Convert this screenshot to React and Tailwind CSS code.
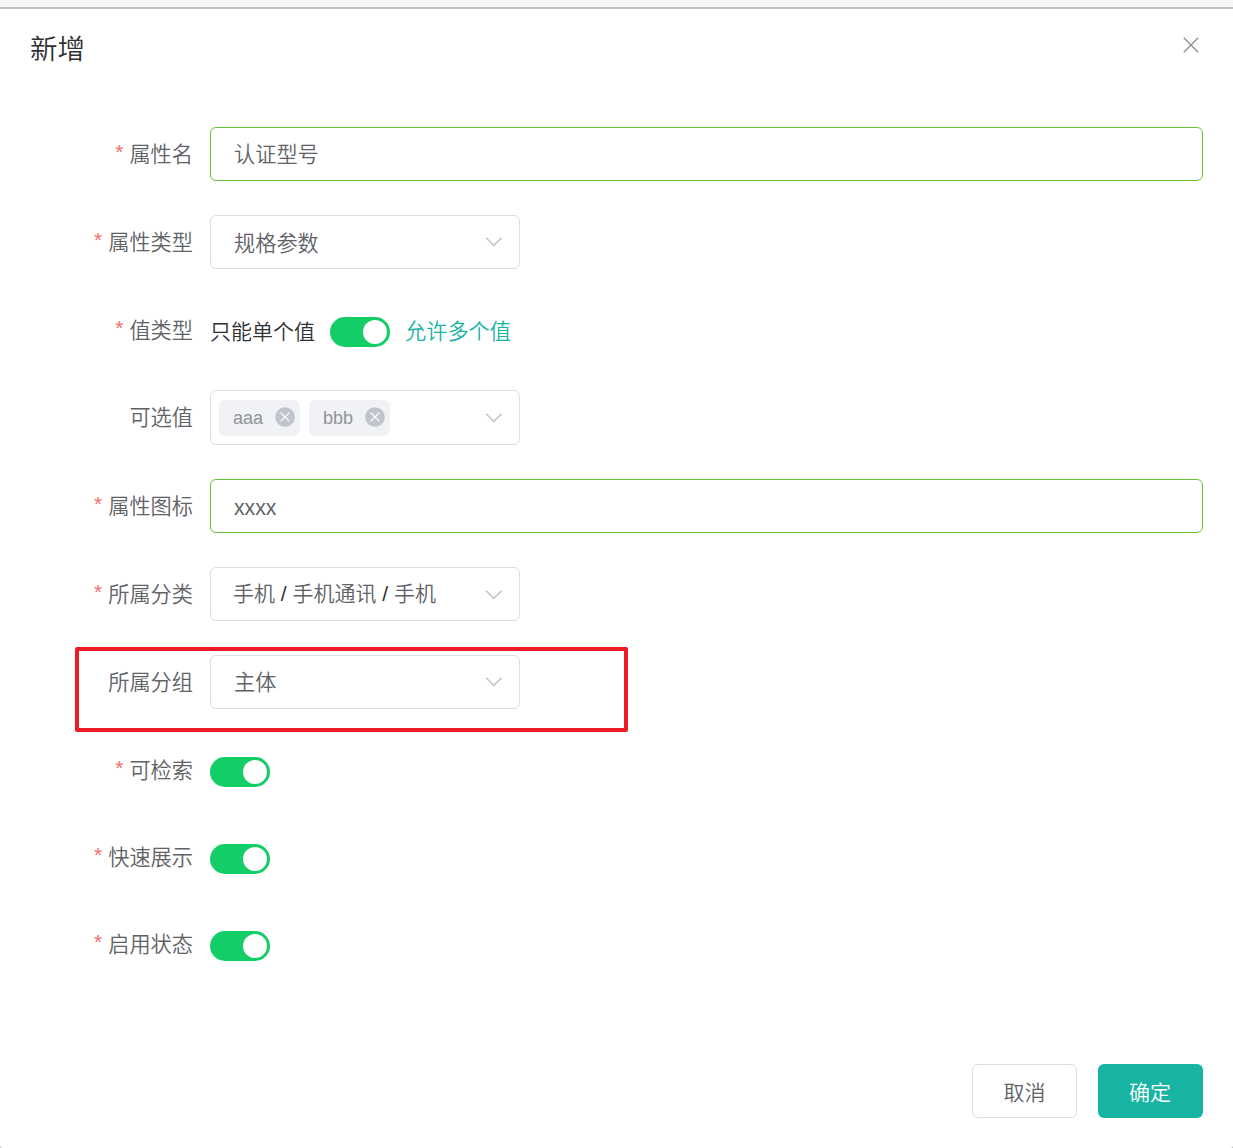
import React, { useState } from 'react';

function ChevronDown({ className = "" }) {
  return (
    <svg className={`w-[18px] h-[10px] shrink-0 ${className}`} viewBox="0 0 18 10" fill="none" stroke="#c0c4cc" strokeWidth="1.5">
      <path d="M1 0.8 L8.8 8.4 L16.6 0.8" />
    </svg>
  );
}

function FormRow({ label, required, height = "h-[88px]", children }) {
  return (
    <div className={`relative flex items-start ${height}`}>
      <label className="w-[180px] h-[54px] shrink-0 pr-[17px] flex items-center justify-end text-[#606266]">
        {required && <span className="mr-[6px] pb-1 text-[#f56c6c]">*</span>}
        <span className="pt-[2px] text-[21.2px]">{label}</span>
      </label>
      {children}
    </div>
  );
}

function TextInput({ value, onChange, className = "pt-[3px]" }) {
  return (
    <input
      value={value}
      onChange={(e) => onChange(e.target.value)}
      className={`grow h-[54px] px-[23px] rounded-[6px] border border-[#67c23a] text-[21.2px] text-[#606266] outline-none ${className}`}
    />
  );
}

function SelectBox({ children, className = "h-[54px] pl-[23px]", arrow = "" }) {
  return (
    <div className={`w-[310px] pr-4 flex items-center justify-between rounded-[6px] border border-[#dcdfe6] text-[#606266] cursor-pointer ${className}`}>
      {children}
      <ChevronDown className={arrow} />
    </div>
  );
}

function Switch({ checked, onChange, className = "" }) {
  return (
    <button
      type="button"
      role="switch"
      aria-checked={checked}
      onClick={() => onChange(!checked)}
      className={`w-[60px] h-[30px] p-[3px] flex items-center rounded-full ${checked ? "justify-end bg-[#13ce66]" : "justify-start bg-[#dcdfe6]"} ${className}`}
    >
      <span className="w-6 h-6 rounded-full bg-white" />
    </button>
  );
}

function Tag({ text, onClose }) {
  return (
    <span className="h-9 w-[81px] pl-[14px] pr-[5px] flex items-center justify-between rounded-[6px] bg-[#f0f2f5] text-[18px] text-[#909399]">
      {text}
      <svg onClick={onClose} className="w-5 h-5 -mt-[2px]" viewBox="0 0 20 20">
        <circle cx="10" cy="10" r="9.8" fill="#c0c4cc" />
        <path d="M5.6 5.6 L14.4 14.4 M14.4 5.6 L5.6 14.4" stroke="#fff" strokeWidth="1.3" />
      </svg>
    </span>
  );
}

function App() {
  const [name, setName] = useState("认证型号");
  const [icon, setIcon] = useState("xxxx");
  const [multiple, setMultiple] = useState(true);
  const [searchable, setSearchable] = useState(true);
  const [quickShow, setQuickShow] = useState(true);
  const [enabled, setEnabled] = useState(true);
  const [values, setValues] = useState(["aaa", "bbb"]);

  return (
    <div className="h-[1148px] w-full flex flex-col bg-[#bfbfbf] font-['Liberation_Sans','Noto_Sans_CJK_SC',sans-serif] text-[21px] leading-[30px] font-[350]">
      {/* Page behind the dialog */}
      <div className="h-[7px] mb-[2px] shrink-0 bg-[#f6f6f6]" />

      <div className="grow flex flex-col px-[30px] pb-[30px] rounded-b-[3px] bg-white">
        {/* Header */}
        <div className="h-[118px] shrink-0 flex justify-between">
          <h2 className="pt-[23px] text-[27.5px] leading-[36px] text-[#303133]">新增</h2>
          <button type="button" className="w-4 h-4 mt-7 mr-[4px]">
            <svg viewBox="0 0 16 16" fill="none" stroke="#909399" strokeWidth="1.5">
              <path d="M0.8 0.8 L15.2 15.2 M15.2 0.8 L0.8 15.2" />
            </svg>
          </button>
        </div>

        {/* Form */}
        <div className="grow">
          <FormRow label="属性名" required>
            <TextInput className="pb-[4px]" value={name} onChange={setName} />
          </FormRow>

          <FormRow label="属性类型" required>
            <SelectBox><span className="pt-[3px] text-[21.2px]">规格参数</span></SelectBox>
          </FormRow>

          <FormRow label="值类型" required height="h-[87px]">
            <div className="mt-[14px] flex items-center gap-[15px]">
              <span className="text-[#303133]">只能单个值</span>
              <Switch checked={multiple} onChange={setMultiple} />
              <span className="text-[21.2px] text-[#17b3a3]">允许多个值</span>
            </div>
          </FormRow>

          <FormRow label="可选值" height="h-[89px]">
            <SelectBox className="h-[55px] pl-2">
              <div className="flex gap-[9px]">
                {values.map((v) => (
                  <Tag key={v} text={v} onClose={() => setValues(values.filter((x) => x !== v))} />
                ))}
              </div>
            </SelectBox>
          </FormRow>

          <FormRow label="属性图标" required>
            <TextInput value={icon} onChange={setIcon} />
          </FormRow>

          <FormRow label="所属分类" required>
            <SelectBox className="h-[54px] pl-[22px]" arrow="mt-[2px]">
              <span className="whitespace-pre">
                手机<span className="text-[#303133]"> / </span>手机通讯<span className="text-[#303133]"> / </span>手机
              </span>
            </SelectBox>
          </FormRow>

          <FormRow label="所属分组">
            <SelectBox><span className="pt-[2px] text-[21.2px]">主体</span></SelectBox>
            {/* Highlight frame */}
            <div className="absolute left-[45px] -top-[8px] w-[553px] h-[85px] rounded-[2px] border-4 border-[#ed1c24] pointer-events-none" />
          </FormRow>

          <FormRow label="可检索" required height="h-[87px]">
            <Switch className="mt-[14px]" checked={searchable} onChange={setSearchable} />
          </FormRow>

          <FormRow label="快速展示" required height="h-[87px]">
            <Switch className="mt-[14px]" checked={quickShow} onChange={setQuickShow} />
          </FormRow>

          <FormRow label="启用状态" required height="h-[87px]">
            <Switch className="mt-[14px]" checked={enabled} onChange={setEnabled} />
          </FormRow>
        </div>

        {/* Footer */}
        <div className="flex justify-end gap-[21px]">
          <button type="button" className="w-[105px] h-[54px] pt-[3px] rounded-[6px] border border-[#dcdfe6] text-[#606266]">
            取消
          </button>
          <button type="button" className="w-[105px] h-[54px] pt-[3px] pr-px rounded-[6px] bg-[#17b3a3] text-white">
            确定
          </button>
        </div>
      </div>
    </div>
  );
}

export default App;
